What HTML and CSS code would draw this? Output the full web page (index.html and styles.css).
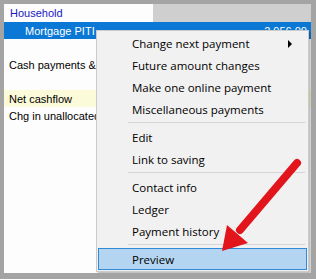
FILE: index.html
```html
<!DOCTYPE html>
<html>
<head>
<link rel="stylesheet" href="styles.css">
</head>
<body>
  <div id="window">
    <div class="row header">
      <div class="cell household">Household</div>
      <div class="cell blank"></div>
    </div>
    <div class="row selected">
      <span class="name indent">Mortgage PITI</span>
      <span class="amount">2,956.00</span>
    </div>
    <div class="row"></div>
    <div class="row"><span class="name">Cash payments &amp; savings</span></div>
    <div class="row"></div>
    <div class="row total"><span class="name">Net cashflow</span></div>
    <div class="row"><span class="name">Chg in unallocated cash</span></div>

    <div id="menu">
      <div class="item">Change next payment <span class="sub"></span></div>
      <div class="item">Future amount changes</div>
      <div class="item">Make one online payment</div>
      <div class="item">Miscellaneous payments</div>
      <div class="sep"></div>
      <div class="item">Edit</div>
      <div class="item">Link to saving</div>
      <div class="sep"></div>
      <div class="item">Contact info</div>
      <div class="item">Ledger</div>
      <div class="item">Payment history</div>
      <div class="sep"></div>
      <div class="item active">Preview</div>
    </div>
  </div>

  <svg id="arrow" width="316" height="279" viewBox="0 0 316 279">
    <line x1="297" y1="163" x2="240" y2="230" stroke="#e3151c" stroke-width="8" stroke-linecap="round"/>
    <polygon points="222,251 227,225 248,243" fill="#e3151c"/>
  </svg>
</body>
</html>
```

FILE: styles.css
```css
body {
  margin: 0;
  padding: 4px 5px 6px 4px;
  background-color: #a4a4a4;
  position: relative;
  font-family: "Liberation Sans", Arial, sans-serif;
  font-size: 11px;
}

#window {
  position: relative;
  height: 269px;
  background-color: #fdfdfd;
  overflow: hidden;
}

.row {
  display: flex;
  align-items: center;
  height: 17px;
  white-space: nowrap;
  color: #000;
}

.header {
  height: 18px;
}

.cell {
  height: 100%;
  display: flex;
  align-items: center;
}

.household {
  width: 149px;
  padding-left: 6px;
  box-sizing: border-box;
  color: #1818c4;
}

.blank {
  flex: 1;
  background-color: #cfcfcf;
}

.name {
  padding-left: 5px;
}

.indent {
  padding-left: 21px;
}

.selected {
  background-color: #0a78d4;
  color: #fff;
  justify-content: space-between;
}

.amount {
  padding-right: 4px;
}

.total {
  background-color: #fbfbd9;
}

#menu {
  position: absolute;
  left: 92px;
  top: 26px;
  width: 211px;
  padding: 1px 0 1px 0;
  background-color: #f1f1f1;
  border: 1px solid #cbcbcb;
  box-shadow: 2px 2px 2px rgba(0, 0, 0, 0.25);
  font-family: "Open Sans", "Noto Sans", sans-serif;
  font-size: 11.5px;
  color: #000;
}

.item {
  position: relative;
  height: 22px;
  line-height: 22px;
  padding-left: 33px;
  white-space: nowrap;
  box-sizing: border-box;
  border: 1px solid transparent;
  margin: 0 1px;
}

.item.active {
  background-color: #b4d5f1;
  border-color: #2f8ad8;
}

.sub {
  position: absolute;
  right: 14px;
  top: 7px;
  width: 0;
  height: 0;
  border-top: 4px solid transparent;
  border-bottom: 4px solid transparent;
  border-left: 4px solid #000;
}

.sep {
  height: 1px;
  margin: 2px 3px 3px 31px;
  background-color: #d5d5d5;
}

#arrow {
  position: absolute;
  top: 0;
  left: 0;
}
```
